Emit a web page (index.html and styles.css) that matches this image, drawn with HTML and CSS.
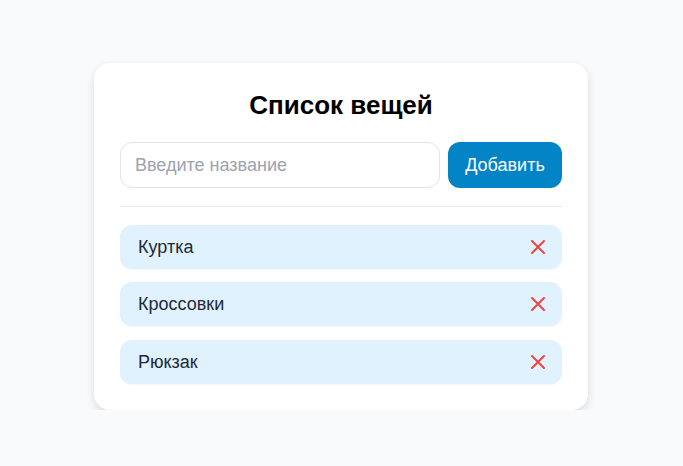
FILE: index.html
```html
<!DOCTYPE html>
<html lang="ru">
<head>
<meta charset="utf-8">
<link rel="stylesheet" href="styles.css">
</head>
<body>
<main class="card">
  <h1 class="title">Список вещей</h1>
  <form class="add-row">
    <input class="add-input" type="text" placeholder="Введите название">
    <button class="add-btn" type="button">Добавить</button>
  </form>
  <hr class="divider">
  <ul class="list">
    <li class="item"><span class="item-name">Куртка</span><button class="del" type="button" aria-label="Удалить"><svg width="14" height="14" viewBox="0 0 14 14"><path d="M1 1L13 13M13 1L1 13" stroke="#ef4444" stroke-width="2" stroke-linecap="round"/></svg></button></li>
    <li class="item"><span class="item-name">Кроссовки</span><button class="del" type="button" aria-label="Удалить"><svg width="14" height="14" viewBox="0 0 14 14"><path d="M1 1L13 13M13 1L1 13" stroke="#ef4444" stroke-width="2" stroke-linecap="round"/></svg></button></li>
    <li class="item item-last"><span class="item-name">Рюкзак</span><button class="del" type="button" aria-label="Удалить"><svg width="14" height="14" viewBox="0 0 14 14"><path d="M1 1L13 13M13 1L1 13" stroke="#ef4444" stroke-width="2" stroke-linecap="round"/></svg></button></li>
  </ul>
</main>
</body>
</html>
```
FILE: styles.css
```css
* { box-sizing: border-box; }
html, body { margin: 0; padding: 0; }
body {
  background: #f8fafc;
  font-family: "Liberation Sans", Arial, sans-serif;
  padding: 63px 1px 0 0;
}
.card {
  width: 494px;
  margin: 0 auto;
  background: #ffffff;
  border-radius: 16px;
  box-shadow: 0 4px 10px rgba(0, 0, 0, 0.12);
  padding: 27px 26px 26px;
}
.title {
  margin: 0 0 22px;
  text-align: center;
  font-size: 26px;
  line-height: 30px;
  font-weight: bold;
  color: #000;
}
.add-row {
  display: flex;
  gap: 8px;
  margin: 0;
}
.add-input {
  flex: 1;
  height: 46px;
  border: 1px solid #e2e4e8;
  border-radius: 12px;
  padding: 0 14px;
  font-family: inherit;
  font-size: 18px;
  color: #1f2937;
  outline: none;
}
.add-input::placeholder { color: #9ca3af; }
.add-btn {
  width: 114px;
  height: 46px;
  border: none;
  border-radius: 12px;
  background: #0284c7;
  color: #ffffff;
  font-family: inherit;
  font-size: 18px;
  padding: 0;
}
.divider {
  border: none;
  border-top: 1px solid #e5e7eb;
  margin: 18px 0 18px;
}
.list {
  list-style: none;
  margin: 0;
  padding: 0;
  display: flex;
  flex-direction: column;
  gap: 13px;
}
.item {
  height: 44px;
  background: #e0f2fe;
  border-radius: 12px;
  display: flex;
  align-items: center;
  justify-content: space-between;
  padding: 0 17px 0 18px;
  box-shadow: 0 1px 2px rgba(0, 0, 0, 0.04);
}
.item-last { margin-top: 1px; }
.item-name {
  font-size: 18px;
  color: #1f2937;
}
.del {
  border: none;
  background: none;
  padding: 0;
  width: 14px;
  height: 14px;
  display: flex;
}
```
